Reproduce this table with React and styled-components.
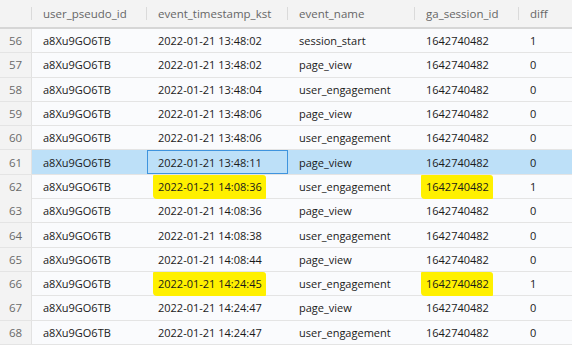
import React from 'react';
import styled, { createGlobalStyle } from 'styled-components';

const GlobalStyle = createGlobalStyle`
    html, body {
        margin: 0;
        padding: 0;
        background: #fafbfd;
        overflow: hidden;
    }
    body {
        font-family: "Open Sans", "Noto Sans", "Liberation Sans", sans-serif;
    }
`;

const COLUMNS = '32px 115px 141px 127px 104px 53px';

const Table = styled.div`
    width: 572px;
    height: 345px;
    display: flex;
    flex-direction: column;
    background: #fafbfd;
    font-size: 11px;
`;

const HeaderRow = styled.div`
    display: grid;
    grid-template-columns: ${COLUMNS};
    height: 29px;
    box-sizing: border-box;
    background: #f3f3f3;
    border-bottom: 2px solid #d6d6d6;
    font-size: 11.5px;
`;

const HeaderCell = styled.div`
    position: relative;
    display: flex;
    align-items: center;
    padding-left: 11px;
    color: #666;

    &::before {
        content: '';
        display: ${(p) => (p.first ? 'none' : 'block')};
        position: absolute;
        left: -1px;
        top: 7px;
        bottom: 7px;
        width: 1px;
        background: #dadada;
    }
`;

const Row = styled.div`
    display: grid;
    grid-template-columns: ${COLUMNS};
    height: 24.3px;
    box-sizing: border-box;
    border-bottom: 1.5px solid #e4e4e4;
    background: ${(p) => (p.selected ? '#bde0f8' : '#fafbfd')};
`;

const NumCell = styled.div`
    display: flex;
    align-items: center;
    justify-content: center;
    background: #f3f3f3;
    color: #6a6a6a;
    border-right: 1px solid #e2e2e2;
    font-size: 11.5px;
`;

const Cell = styled.div`
    display: flex;
    align-items: center;
    padding-left: 11px;
    color: #1a1a1a;
    white-space: nowrap;
    box-shadow: ${(p) => (p.focused ? 'inset 0 0 0 1px #3f94de' : 'none')};
`;

const Marker = styled.span`
    background: #fff000;
    padding: 4px 4px 5px 5px;
    margin-left: -5px;
    border-radius: 1px 3px 1px 4px;
`;

const rows = [
    [56, '13:48:02', 'session_start', 1],
    [57, '13:48:02', 'page_view', 0],
    [58, '13:48:04', 'user_engagement', 0],
    [59, '13:48:06', 'page_view', 0],
    [60, '13:48:06', 'user_engagement', 0],
    [61, '13:48:11', 'page_view', 0],
    [62, '14:08:36', 'user_engagement', 1],
    [63, '14:08:36', 'page_view', 0],
    [64, '14:08:38', 'user_engagement', 0],
    [65, '14:08:44', 'page_view', 0],
    [66, '14:24:45', 'user_engagement', 1],
    [67, '14:24:47', 'page_view', 0],
    [68, '14:24:47', 'user_engagement', 0],
];

const headers = ['', 'user_pseudo_id', 'event_timestamp_kst', 'event_name', 'ga_session_id', 'diff'];

const App = () => {
    return (
        <>
            <GlobalStyle />
            <Table>
                <HeaderRow>
                    {headers.map((h, i) => (
                        <HeaderCell key={i} first={i === 0}>{h}</HeaderCell>
                    ))}
                </HeaderRow>
                {rows.map(([n, time, name, diff]) => {
                    const marked = diff === 1 && n !== 56;
                    const ts = `2022-01-21 ${time}`;
                    return (
                        <Row key={n} selected={n === 61}>
                            <NumCell>{n}</NumCell>
                            <Cell>a8Xu9GO6TB</Cell>
                            <Cell focused={n === 61}>{marked ? <Marker>{ts}</Marker> : ts}</Cell>
                            <Cell>{name}</Cell>
                            <Cell>{marked ? <Marker>1642740482</Marker> : '1642740482'}</Cell>
                            <Cell>{diff}</Cell>
                        </Row>
                    );
                })}
            </Table>
        </>
    );
};

export default App;
